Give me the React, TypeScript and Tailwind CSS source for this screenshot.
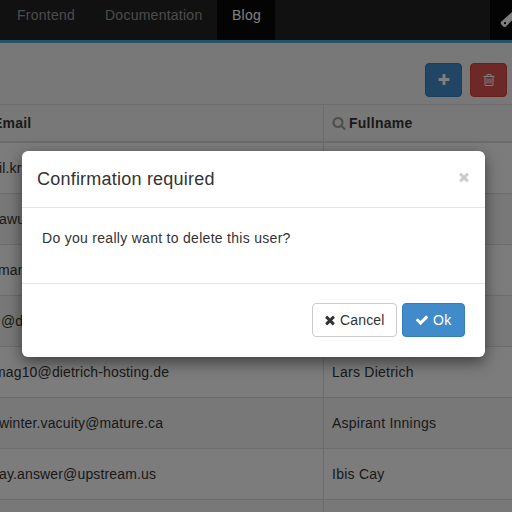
import React from "react";

const icons = {
  times:
    "M1490 1322q0 40-28 68l-136 136q-28 28-68 28t-68-28l-294-294-294 294q-28 28-68 28t-68-28l-136-136q-28-28-28-68t28-68l294-294-294-294q-28-28-28-68t28-68l136-136q28-28 68-28t68 28l294 294 294-294q28-28 68-28t68 28l136 136q28 28 28 68t-28 68l-294 294 294 294q28 28 28 68z",
  check:
    "M1671 566q0 40-28 68l-724 724-136 136q-28 28-68 28t-68-28l-136-136-362-362q-28-28-28-68t28-68l136-136q28-28 68-28t68 28l294 295 656-657q28-28 68-28t68 28l136 136q28 28 28 68z",
  plus:
    "M1600 736v192q0 40-28 68t-68 28h-416v416q0 40-28 68t-68 28h-192q-40 0-68-28t-28-68v-416h-416q-40 0-68-28t-28-68v-192q0-40 28-68t68-28h416v-416q0-40 28-68t68-28h192q40 0 68 28t28 68v416h416q40 0 68 28t28 68z",
  search:
    "M1216 832q0-185-131.5-316.5t-316.5-131.5-316.5 131.5-131.5 316.5 131.5 316.5 316.5 131.5 316.5-131.5 131.5-316.5zm512 832q0 52-38 90t-90 38q-54 0-90-38l-343-342q-179 124-399 124-143 0-273.5-55.5t-225-150-150-225-55.5-273.5 55.5-273.5 150-225 225-150 273.5-55.5 273.5 55.5 225 150 150 225 55.5 273.5q0 220-124 399l343 343q37 37 37 90z",
  trash:
    "M704 736v576q0 14-9 23t-23 9h-64q-14 0-23-9t-9-23v-576q0-14 9-23t23-9h64q14 0 23 9t9 23zm256 0v576q0 14-9 23t-23 9h-64q-14 0-23-9t-9-23v-576q0-14 9-23t23-9h64q14 0 23 9t9 23zm256 0v576q0 14-9 23t-23 9h-64q-14 0-23-9t-9-23v-576q0-14 9-23t23-9h64q14 0 23 9t9 23zm128 724v-948h-896v948q0 22 7 40.5t14.5 27 10.5 8.5h832q3 0 10.5-8.5t14.5-27 7-40.5zm-672-1076h448l-48-117q-7-9-17-11h-317q-10 2-17 11zm928 32v64q0 14-9 23t-23 9h-96v948q0 83-47 143.5t-113 60.5h-832q-66 0-113-58.5t-47-141.5v-952h-96q-14 0-23-9t-9-23v-64q0-14 9-23t23-9h309l70-167q15-37 54-63t79-26h320q40 0 79 26t54 63l70 167h309q14 0 23 9t9 23z",
};

function Icon({ name, className }: { name: keyof typeof icons; className?: string }) {
  return (
    <svg viewBox="0 0 1792 1792" fill="currentColor" className={"shrink-0 " + (className ?? "size-3.5")}>
      <path d={icons[name]} />
    </svg>
  );
}

const rows = [
  { email: "il.kr", offset: "-ml-[1px]", name: "" },
  { email: "awu", offset: "-ml-[1px]", name: "" },
  { email: "man", offset: "-ml-[2px]", name: "" },
  { email: "@d", offset: "ml-[1px]", name: "" },
  { email: "mag10@dietrich-hosting.de", offset: "-ml-[6px]", name: "Lars Dietrich" },
  { email: "winter.vacuity@mature.ca", offset: "-ml-[1px]", name: "Aspirant Innings" },
  { email: "ay.answer@upstream.us", offset: "-ml-[1px]", name: "Ibis Cay" },
  { email: "", offset: "", name: "" },
];

function Navbar() {
  return (
    <nav className="flex h-[43px] shrink-0 items-stretch border-b-3 border-[#4ba6d3] bg-[#222] tracking-[0.25px]">
      <a className="w-[90px] pt-[5px] pl-[17px] text-[#999]">Frontend</a>
      <a className="w-[127px] pt-[5px] pl-[15px] text-[#999]">Documentation</a>
      <a className="w-[58px] bg-[#080808] pt-[5px] pl-[15px] text-white">Blog</a>
      <div className="ml-auto w-[22px] overflow-hidden bg-[#080808]">
        <svg viewBox="0 0 22 40" className="h-10 w-[22px]">
          <path
            fillRule="evenodd"
            fill="#fff"
            d="M22 12 L11.2 21.8 Q10.1 22.9 11.2 24.2 L13 26.3 Q14.3 27.7 15.9 26.4 L22 20.5Z M15 22.1a1.1 1.1 0 1 1 0 2.2a1.1 1.1 0 0 1 0-2.2Z"
          />
        </svg>
      </div>
    </nav>
  );
}

function UserTable() {
  return (
    <div className="flex flex-col">
      <div className="grid h-[39px] grid-cols-[323px_189px] border-t border-b-2 border-t-[#d9d9d9] border-b-[#d9d9d9] font-bold">
        <div className="flex items-center overflow-hidden">
          <span className="-ml-[7px] tracking-[0.2px]">Email</span>
        </div>
        <div className="flex items-center border-l border-[#d9d9d9] pl-2">
          <Icon name="search" className="mr-[3px] size-[14px] text-[#999]" />
          <span className="tracking-[0.26px]">Fullname</span>
        </div>
      </div>
      {rows.map((row, i) => (
        <div
          key={i}
          className="grid h-[51px] grid-cols-[323px_189px] border-b border-[#d9d9d9] odd:bg-[#f1f1f1] even:bg-[#f8f8f8]"
        >
          <div className="flex items-center overflow-hidden whitespace-nowrap tracking-[0.15px]">
            <span className={row.offset}>{row.email}</span>
          </div>
          <div className="flex items-center border-l border-[#d9d9d9] pl-2 tracking-[0.24px]">{row.name}</div>
        </div>
      ))}
    </div>
  );
}

function ConfirmDialog() {
  return (
    <div className="mt-[151px] ml-[22px] flex h-[206px] w-[463px] flex-col rounded-md bg-white bg-clip-padding shadow-[0_5px_15px_rgba(0,0,0,0.5)]">
      <header className="flex h-[57px] items-center justify-between border-b border-[#e5e5e5] pr-[14px] pl-[15px]">
        <h4 className="text-[18px] leading-[26px] tracking-[0.22px]">Confirmation required</h4>
        <Icon name="times" className="mb-[5px] size-[14px] text-[#ccc]" />
      </header>
      <div className="flex h-[75px] px-5 pt-[20px]">Do you really want to delete this user?</div>
      <footer className="flex grow items-start justify-end gap-[5px] border-t border-[#e5e5e5] pt-[19px] pr-5">
        <button className="flex h-[34px] w-[85px] items-center rounded border border-[#ccc] pl-[10px] tracking-[0.15px]">
          <Icon name="times" className="mr-[3px] size-3.5" />
          Cancel
        </button>
        <button className="flex h-[34px] w-[63px] items-center rounded border border-[#357ebd] bg-[#428bca] pl-[12px] text-white">
          <Icon name="check" className="mr-1 size-3.5" />
          Ok
        </button>
      </footer>
    </div>
  );
}

export default function App() {
  return (
    <div className="relative h-[512px] w-[512px] overflow-hidden bg-[#f1f1f1] font-['Liberation_Sans',Arial,sans-serif] text-[14px] leading-5 tracking-[0.29px] text-[#333]">
      <Navbar />
      <div className="flex h-[61px] justify-end gap-2 pt-5 pr-[5px]">
        <button className="flex h-[34px] w-[37px] items-center justify-center rounded border border-[#357ebd] bg-[#428bca] text-white">
          <Icon name="plus" />
        </button>
        <button className="flex h-[34px] w-[37px] items-center justify-center rounded border border-[#d43f3a] bg-[#d9534f] text-white">
          <Icon name="trash" />
        </button>
      </div>
      <UserTable />
      <div className="absolute inset-0 flex items-start bg-black/50">
        <ConfirmDialog />
      </div>
    </div>
  );
}
